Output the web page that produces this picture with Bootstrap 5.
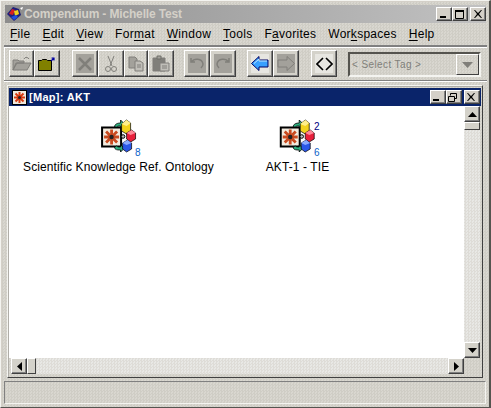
<!DOCTYPE html>
<html lang="en">
<head>
  <meta charset="UTF-8">
  <meta name="viewport" content="width=device-width, initial-scale=1.0">
  <title>Compendium - Michelle Test</title>
  <link href="https://cdn.jsdelivr.net/npm/bootstrap@5.3.0/dist/css/bootstrap.min.css" rel="stylesheet">
  <style>
    html, body { margin: 0; width: 491px; height: 408px; overflow: hidden; }
    body { font-family: "Liberation Sans", Arial, sans-serif; font-size: 12px; color: #000; background: #d4d0c8; line-height: 1; }
    .stipple { background-color: #d4d2ca; background-image: conic-gradient(#cfcdc5 25%, #d9d7d0 0 50%, #cfcdc5 0 75%, #d9d7d0 0); background-size: 3px 3px; }
    .app-win { width: 491px; height: 408px; padding: 4px 3px 3px 4px; border-top: 1px solid #f4f4f0; border-left: 1px solid #f4f4f0; border-right: 2px solid #55544f; border-bottom: 1px solid #55544f; box-shadow: inset 1px 1px 0 #d4d0c8; }
    .app-title { height: 18px; flex: none; background: linear-gradient(90deg, #8d8d8d, #c2c2c2); color: #d4d0c8; font-weight: 700; font-size: 12px; letter-spacing: -.15px; padding-left: 1px; }
    .cap-btn { width: 16px; height: 14px; background: #d4d0c8; border: 1px solid; border-color: #fff #404040 #404040 #fff; box-shadow: inset -1px -1px 0 #808080; display: flex; align-items: center; justify-content: center; }
    .cap-gap { margin-left: 2px; }
    .menu-row { height: 22px; flex: none; padding-left: 5px; gap: 12px; font-size: 12px; letter-spacing: .27px; }
    .menu-row u { text-underline-offset: 2px; }
    .tool-row { height: 36px; flex: none; margin: 0 -1px; padding: 3px 0 0 5px; border-top: 2px solid #808080; border-bottom: 1px solid #808080; box-shadow: inset 1px 1px 0 #fff, 0 1px 0 #fff; }
    .tool-btn { width: 26px; height: 27px; flex: none; padding: 0; border: 1px solid; border-color: #fff #404040 #404040 #fff; box-shadow: inset -1px -1px 0 #808080; background: transparent; display: flex; align-items: center; justify-content: center; }
    .tool-off { background: #a3a19b; box-shadow: inset -1px -1px 0 #808080, inset 0 0 0 3px #d4d2ca; }
    .tool-lit { background: #e7e6e1; box-shadow: inset -1px -1px 0 #808080, inset 0 0 0 3px #d4d2ca; }
    .tool-w25 { width: 25px; }
    .tool-w24 { width: 24px; }
    .tool-sep { width: 12px; flex: none; }
    .tool-sep-s { width: 10px; flex: none; }
    .tool-sep-m { width: 11px; flex: none; }
    .tag-box { width: 133px; height: 25px; margin: 2px 0 0 11px; border: 2px solid; border-color: #55544f #f4f4f0 #f4f4f0 #55544f; color: #807f7a; font-size: 10px; letter-spacing: .4px; padding-left: 2px; }
    .tag-drop { width: 23px; height: 21px; margin-left: auto; border: 1px solid; border-color: #fff #404040 #404040 #fff; display: flex; align-items: center; justify-content: center; }
    .desk-area { flex: 1 1 auto; min-height: 0; padding: 4px 0 3px 2px; margin-right: 3px; }
    .map-frame { height: 100%; border: 1px solid; border-color: #f4f4f0 #404040 #404040 #f4f4f0; padding: 2px 2px 3px 1px; box-shadow: inset 1px 1px 0 #b0aea8; }
    .map-title { height: 18px; flex: none; margin-right: -1px; background: #0a246a; color: #fff; font-weight: 700; font-size: 11px; letter-spacing: .3px; padding: 0 1px 0 3px; }
    .map-title svg:first-child { margin-right: 2px; }
    .map-body { flex: 1 1 auto; min-height: 0; }
    .map-canvas { flex: 1 1 auto; position: relative; background: #fff; }
    .map-node { position: absolute; text-align: center; white-space: nowrap; letter-spacing: .1px; font-size: 12px; transform: translateX(-50%); }
    .node-icon { position: relative; width: 36px; height: 34px; margin: 0 auto 8px; }
    .node-icon svg { display: block; }
    .node-count { position: absolute; font-size: 10px; left: 34.5px; letter-spacing: 0; }
    .count-top { top: 3px; color: #000080; }
    .count-low { top: 29px; color: #0a62c8; }
    .track { background-color: #e3e3e0; background-image: conic-gradient(#dedcd7 25%, #e8e8e5 0 50%, #dedcd7 0 75%, #e8e8e5 0); background-size: 3px 3px; }
    .scroll-v { width: 16px; flex: none; }
    .scroll-h { height: 16px; flex: none; margin-left: 2px; }
    .sb-btn { flex: none; width: 16px; height: 16px; background: #d4d2ca; border: 1px solid; border-color: #fff #404040 #404040 #fff; box-shadow: inset -1px -1px 0 #808080; display: flex; align-items: center; justify-content: center; }
    .sb-thumb-v { height: 8px; width: 16px; flex: none; background: #d4d2ca; border: 1px solid; border-color: #fff #404040 #404040 #fff; }
    .sb-thumb-h { width: 9px; height: 16px; flex: none; background: #d4d2ca; border: 1px solid; border-color: #fff #404040 #404040 #fff; }
    .corner-fill { width: 16px; flex: none; }
    .status-row { height: 23px; flex: none; border: 1px solid; margin-left: -1px; border-color: #808080 #f4f4f0 #f4f4f0 #808080; }
  </style>
</head>
<body>
  <div class="app-win stipple d-flex flex-column">
    <div class="app-title d-flex align-items-center">
      <svg width="18" height="16" viewBox="0 0 18 16" class="flex-shrink-0">
        <path d="M1 8 7 1l6 2 2 6-7 6z" fill="#20207a"/>
        <path d="M3 8l3-5 3 1-2 5z" fill="#d82020"/>
        <path d="M8 5l4-1 1 4-4 2z" fill="#f0d020"/>
        <path d="M5 11l5-2 2 2-4 3z" fill="#2050e0"/>
        <path d="M14 2l3-1-1 3z" fill="#fff"/>
      </svg>
      <span>Compendium - Michelle Test</span>
      <div class="ms-auto d-flex">
        <div class="cap-btn"><svg width="10" height="8"><rect x="1" y="6" width="6" height="2"/></svg></div>
        <div class="cap-btn"><svg width="10" height="9"><path d="M.5 1.500h8v7h-8z" fill="none" stroke="#000"/><rect x="0" y="0" width="9" height="2"/></svg></div>
        <div class="cap-btn cap-gap"><svg width="9" height="8"><path d="M1 0l3 3 3-3h1L5 4l3 4H7L4 5 1 8H0l3-4L0 0z"/></svg></div>
      </div>
    </div>

    <div class="menu-row d-flex align-items-center">
      <span><u>F</u>ile</span><span><u>E</u>dit</span><span><u>V</u>iew</span><span>For<u>m</u>at</span><span><u>W</u>indow</span><span><u>T</u>ools</span><span>F<u>a</u>vorites</span><span>Wor<u>k</u>spaces</span><span><u>H</u>elp</span>
    </div>

    <div class="tool-row d-flex align-items-start">
      <button class="tool-btn tool-w25"><svg width="20" height="16" viewBox="0 0 20 16"><path d="M1 14V4h5l1 1h5v2H5L1 14l3-7h15l-4 7z" fill="#a3a19b" stroke="#807f7a"/><path d="M12 3c1-2 3-2 4-1l1 1" fill="none" stroke="#807f7a"/></svg></button>
      <button class="tool-btn"><svg width="20" height="16" viewBox="0 0 20 16"><path d="M1.500 14.500v-10h3l1-1h4l1 1h4v10z" fill="#808000" stroke="#000"/><path d="M14 5l3-3m-2.500 0H17v2.500" fill="none" stroke="#0000a0" stroke-width="1.200"/></svg></button>
      <div class="tool-sep"></div>
      <button class="tool-btn tool-off"><svg width="14" height="14"><path d="M1 1l12 12M13 1 1 13" stroke="#807f7a" stroke-width="2.500"/></svg></button>
      <button class="tool-btn"><svg width="12" height="18" viewBox="0 0 12 18"><path d="M3 1l4 10M9 1 5 11" stroke="#807f7a" fill="none"/><circle cx="3" cy="14" r="2.500" fill="none" stroke="#807f7a"/><circle cx="9" cy="14" r="2.500" fill="none" stroke="#807f7a"/></svg></button>
      <button class="tool-btn tool-w24"><svg width="16" height="16"><path d="M1 1h6l2 2v9H1z" fill="#a3a19b" stroke="#807f7a"/><path d="M7 5h5l3 2v8H7z" fill="#c0beb8" stroke="#807f7a"/><path d="M9 9h4M9 11h4" stroke="#807f7a"/></svg></button>
      <button class="tool-btn"><svg width="18" height="17"><path d="M1 3h12v13H1z" fill="#807f7a" stroke="#807f7a"/><path d="M5 1h4v3H5z" fill="#a3a19b" stroke="#6f6e69"/><path d="M8 8h9v8H8z" fill="#c0beb8" stroke="#807f7a"/><path d="M10 11h5M10 13h5" stroke="#807f7a"/></svg></button>
      <div class="tool-sep-s"></div>
      <button class="tool-btn tool-off"><svg width="16" height="13"><path d="M2 1v4h4M2.500 5C5 1 13 1 14 7c0 2-1 3-2 4" fill="none" stroke="#807f7a" stroke-width="1.500"/></svg></button>
      <button class="tool-btn tool-off"><svg width="16" height="13"><path d="M14 1v4h-4M13.500 5C11 1 3 1 2 7c0 2 1 3 2 4" fill="none" stroke="#807f7a" stroke-width="1.500"/></svg></button>
      <div class="tool-sep-m"></div>
      <button class="tool-btn tool-lit"><svg width="18" height="15" viewBox="0 0 18 15"><path d="M.5 7.500 8 .5v3.500h9v7H8v3.500z" fill="#39a0ff" stroke="#000060"/><path d="M3 7.500 8 3v2h8" fill="none" stroke="#bfe6ff"/></svg></button>
      <button class="tool-btn tool-off"><svg width="18" height="15"><path d="M17.500 7.500 10 .5v3.500H1v7h9v3.500z" fill="#a3a19b" stroke="#807f7a"/></svg></button>
      <div class="tool-sep"></div>
      <button class="tool-btn tool-lit"><svg width="17" height="14"><path d="M7 1 1 7l6 6M10 1l6 6-6 6" fill="none" stroke="#000" stroke-width="1.600"/></svg></button>
      <div class="tag-box d-flex align-items-center">
        <span>&lt; Select Tag &gt;</span>
        <div class="tag-drop"><svg width="11" height="6"><path d="M0 0h11L5.500 6z" fill="#807f7a"/></svg></div>
      </div>
    </div>

    <div class="desk-area">
      <div class="map-frame d-flex flex-column">
        <div class="map-title d-flex align-items-center">
          <svg width="15" height="15" viewBox="0 0 15 15" class="flex-shrink-0"><rect width="15" height="15" fill="#000"/><rect x="1" y="1" width="13" height="13" fill="#efe8dc"/><path d="M7.500 2v11M2 7.500h11M3.500 3.500l8 8M11.500 3.500l-8 8" stroke="#d83a10" stroke-width="2"/><circle cx="7.500" cy="7.500" r="1.500" fill="#222"/></svg>
          <span>[Map]: AKT</span>
          <div class="ms-auto d-flex">
            <div class="cap-btn"><svg width="10" height="8"><rect x="1" y="6" width="6" height="2"/></svg></div>
            <div class="cap-btn"><svg width="10" height="9"><path d="M2.500 2.500v-2h6v5h-2M.5 3.500h6v5h-6z" fill="none" stroke="#000"/></svg></div>
            <div class="cap-btn cap-gap"><svg width="9" height="8"><path d="M1 0l3 3 3-3h1L5 4l3 4H7L4 5 1 8H0l3-4L0 0z"/></svg></div>
          </div>
        </div>
        <div class="map-body d-flex">
          <div class="map-canvas">
            <div class="map-node" style="left:109.5px;top:13px">
              <div class="node-icon">
                <svg width="36" height="34" viewBox="0 0 36 34"><use href="#node-glyph"/></svg>
                <span class="node-count count-low">8</span>
              </div>
              <span>Scientific Knowledge Ref. Ontology</span>
            </div>
            <div class="map-node" style="left:288.5px;top:13px">
              <div class="node-icon">
                <svg width="36" height="34" viewBox="0 0 36 34"><use href="#node-glyph"/></svg>
                <span class="node-count count-top">2</span>
                <span class="node-count count-low">6</span>
              </div>
              <span>AKT-1 - TIE</span>
            </div>
          </div>
          <div class="scroll-v track d-flex flex-column">
            <div class="sb-btn"><svg width="9" height="5"><path d="M4.500 0 9 5H0z"/></svg></div>
            <div class="sb-thumb-v"></div>
            <div class="flex-grow-1"></div>
            <div class="sb-btn"><svg width="9" height="5"><path d="M0 0h9L4.500 5z"/></svg></div>
          </div>
        </div>
        <div class="d-flex">
          <div class="scroll-h track d-flex flex-grow-1">
            <div class="sb-btn"><svg width="5" height="9"><path d="M5 0v9L0 4.500z"/></svg></div>
            <div class="sb-thumb-h"></div>
            <div class="flex-grow-1"></div>
            <div class="sb-btn"><svg width="5" height="9"><path d="M0 0v9l5-4.500z"/></svg></div>
          </div>
          <div class="corner-fill"></div>
        </div>
      </div>
    </div>

    <div class="status-row"></div>
  </div>

  <svg width="0" height="0" class="position-absolute">
    <defs>
      <g id="node-glyph">
        <rect x="1.500" y="8.500" width="19" height="19" fill="#f2ebdf" stroke="#000" stroke-width="2"/>
        <path d="M11 10.500v15M3.500 18h15M5.500 12.500l11 11M16.500 12.500l-11 11" stroke="#c84a20" stroke-width="2.800"/>
        <circle cx="11" cy="18" r="2.200" fill="#222"/>
        <path d="M14 8C14 5 17 4 20 4V1l4 4-4 4V7c-2 0-3 0-4 1z" fill="#30b080" stroke="#000" stroke-width=".8"/>
        <path d="M14 28c0 3 3 3 6 3v2l4-4-4-3v2c-2 0-3 0-4-1z" fill="#30b080" stroke="#000" stroke-width=".8"/>
        <circle cx="22.500" cy="17.500" r="1.800" fill="#bbb" stroke="#000"/>
        <path d="M21 5l5-4 4 3v8l-4 3-5-3z" fill="#f2d21c" stroke="#000" stroke-width=".7"/>
        <path d="M21 5l5 2 4-3-4-3z" fill="#ffef8a"/>
        <path d="M26 14l5-3 4 3v6l-5 3-4-3z" fill="#e8203c" stroke="#000" stroke-width=".7"/>
        <path d="M26 14l4 2 5-2-4-3z" fill="#ff8898"/>
        <path d="M22 24l5-3 4 3v6l-5 3-4-3z" fill="#2a58e8" stroke="#000" stroke-width=".7"/>
        <path d="M22 24l4 2 5-2-4-3z" fill="#88a8ff"/>
      </g>
    </defs>
  </svg>
  <script src="https://cdn.jsdelivr.net/npm/bootstrap@5.3.0/dist/js/bootstrap.bundle.min.js"></script>
</body>
</html>
